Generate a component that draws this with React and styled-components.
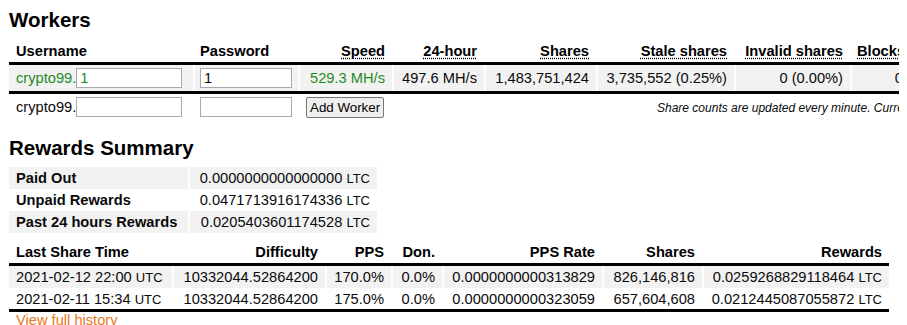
import React from 'react'
import styled, { createGlobalStyle } from 'styled-components'

const GlobalStyle = createGlobalStyle`
  html, body {
    overflow: hidden;
  }
  body {
    margin: 8px;
    font-family: "Liberation Sans", Arial, sans-serif;
    font-size: 14.667px;
    color: #0a0a0a;
    background: #fff;
  }
`

const Page = styled.div`
  padding: 0 1px;
`

const Title = styled.h2`
  margin: 0 0 7px;
  font-size: 20.5px;
  line-height: 24px;
  font-weight: bold;
  color: #000;
`

const Table = styled.table`
  border-collapse: separate;
  border-spacing: 0;
  table-layout: fixed;
  width: ${p => p.$width}px;
  margin: ${p => p.$margin || '0'};
  line-height: 17px;
`

const Th = styled.th`
  padding: 4px 7px 2px;
  font-weight: bold;
  color: #000;
  text-align: ${p => (p.$left ? 'left' : 'right')};
  border-bottom: 3px solid #000;
  white-space: nowrap;
`

const Abbr = styled.abbr`
  text-decoration: underline dotted;
  text-underline-offset: 2px;
  cursor: help;
`

const Row = styled.tr`
  & > td {
    background: ${p => (p.$shaded ? '#f2f2f2' : 'transparent')};
    border-bottom: ${p => (p.$closed ? '3px solid #000' : '0')};
  }
  & > td + td {
    box-shadow: inset 2px 0 0 #fff;
  }
`

const Td = styled.td`
  padding: ${p => p.$pad || '3px 7px'};
  text-align: ${p => (p.$left ? 'left' : 'right')};
  vertical-align: baseline;
  white-space: nowrap;
  color: ${p => (p.$green ? '#1f8a1f' : 'inherit')};
  font-weight: ${p => (p.$bold ? 'bold' : 'normal')};
`

const Field = styled.input`
  box-sizing: border-box;
  width: ${p => p.$width}px;
  height: 20px;
  margin: 0;
  padding: 0 3px;
  border: 1px solid #a9a9a9;
  font-family: inherit;
  font-size: 14.667px;
  color: inherit;
  background: #fff;
  vertical-align: baseline;
`

const Button = styled.button`
  height: 21px;
  padding: 1px 3px;
  margin: 0 0 0 1px;
  border: 1px solid #767676;
  border-radius: 2px;
  background: #efefef;
  font-family: "Liberation Sans", Arial, sans-serif;
  font-size: 13.333px;
  color: #000;
`

const Note = styled.td`
  padding: 3px 7px 3px ${p => p.$indent}px;
  text-align: left;
  font-style: italic;
  font-size: 12px;
  white-space: nowrap;
  vertical-align: baseline;
`

const Unit = styled.span`
  font-size: 13px;
`

const HistoryLink = styled.a`
  display: block;
  padding: 0 7px;
  line-height: 17px;
  color: #e8781e;
  text-decoration: none;
`

const workerCols = [184, 105, 94, 92, 112, 138, 116, 60]
const summaryCols = [179, 189]
const historyCols = [163, 153, 66, 51, 160, 100, 187]

const sum = arr => arr.reduce((a, b) => a + b, 0)

const Cols = ({ widths }) => (
  <colgroup>
    {widths.map((w, i) => (
      <col key={i} style={{ width: w }} />
    ))}
  </colgroup>
)

const summary = [
  ['Paid Out', '0.0000000000000000'],
  ['Unpaid Rewards', '0.0471713916174336'],
  ['Past 24 hours Rewards', '0.0205403601174528'],
]

const history = [
  ['2021-02-12 22:00', '10332044.52864200', '170.0%', '0.0%', '0.0000000000313829', '826,146,816', '0.0259268829118464'],
  ['2021-02-11 15:34', '10332044.52864200', '175.0%', '0.0%', '0.0000000000323059', '657,604,608', '0.0212445087055872'],
]

const App = () => {
  return (
    <Page>
      <GlobalStyle />
      <Title>Workers</Title>
      <Table $width={sum(workerCols)} $margin="0 0 15px">
        <Cols widths={workerCols} />
        <thead>
          <tr>
            <Th $left>Username</Th>
            <Th $left>Password</Th>
            <Th><Abbr title="Current speed">Speed</Abbr></Th>
            <Th><Abbr title="Average speed over 24 hours">24-hour</Abbr></Th>
            <Th><Abbr title="Accepted shares">Shares</Abbr></Th>
            <Th><Abbr title="Stale shares">Stale shares</Abbr></Th>
            <Th><Abbr title="Invalid shares">Invalid shares</Abbr></Th>
            <Th><Abbr title="Blocks found">Blocks</Abbr></Th>
          </tr>
        </thead>
        <tbody>
          <Row $shaded $closed>
            <Td $left $green>crypto99.<Field $width={106} defaultValue="1" /></Td>
            <Td $left><Field $width={92} defaultValue="1" /></Td>
            <Td $green>529.3 MH/s</Td>
            <Td>497.6 MH/s</Td>
            <Td>1,483,751,424</Td>
            <Td>3,735,552 (0.25%)</Td>
            <Td>0 (0.00%)</Td>
            <Td>0</Td>
          </Row>
          <Row>
            <Td $left>crypto99.<Field $width={106} /></Td>
            <Td $left><Field $width={92} /></Td>
            <Td $left><Button type="button">Add Worker</Button></Td>
            <Note colSpan={5} $indent={265}>
              Share counts are updated every minute. Current speed is averaged over the last 10 minutes.
            </Note>
          </Row>
        </tbody>
      </Table>

      <Title>Rewards Summary</Title>
      <Table $width={sum(summaryCols)}>
        <Cols widths={summaryCols} />
        <tbody>
          {summary.map(([label, value], i) => (
            <Row key={label} $shaded={i % 2 === 0}>
              <Td $left $bold $pad="2.5px 7px">{label}</Td>
              <Td $pad="2.5px 7px">{value} <Unit>LTC</Unit></Td>
            </Row>
          ))}
        </tbody>
      </Table>

      <Table $width={sum(historyCols)} $margin="7px 0 0">
        <Cols widths={historyCols} />
        <thead>
          <tr>
            <Th $left>Last Share Time</Th>
            <Th>Difficulty</Th>
            <Th>PPS</Th>
            <Th>Don.</Th>
            <Th>PPS Rate</Th>
            <Th>Shares</Th>
            <Th>Rewards</Th>
          </tr>
        </thead>
        <tbody>
          {history.map((r, i) => (
            <Row key={r[0]} $shaded={i % 2 === 0} $closed={i === history.length - 1}>
              <Td $left $pad="3px 7px 1.5px">{r[0]} <Unit>UTC</Unit></Td>
              <Td $pad="3px 7px 1.5px">{r[1]}</Td>
              <Td $pad="3px 7px 1.5px">{r[2]}</Td>
              <Td $pad="3px 7px 1.5px">{r[3]}</Td>
              <Td $pad="3px 7px 1.5px">{r[4]}</Td>
              <Td $pad="3px 7px 1.5px">{r[5]}</Td>
              <Td $pad="3px 7px 1.5px">{r[6]} <Unit>LTC</Unit></Td>
            </Row>
          ))}
        </tbody>
      </Table>
      <HistoryLink href="#history">View full history</HistoryLink>
    </Page>
  )
}

export default App
